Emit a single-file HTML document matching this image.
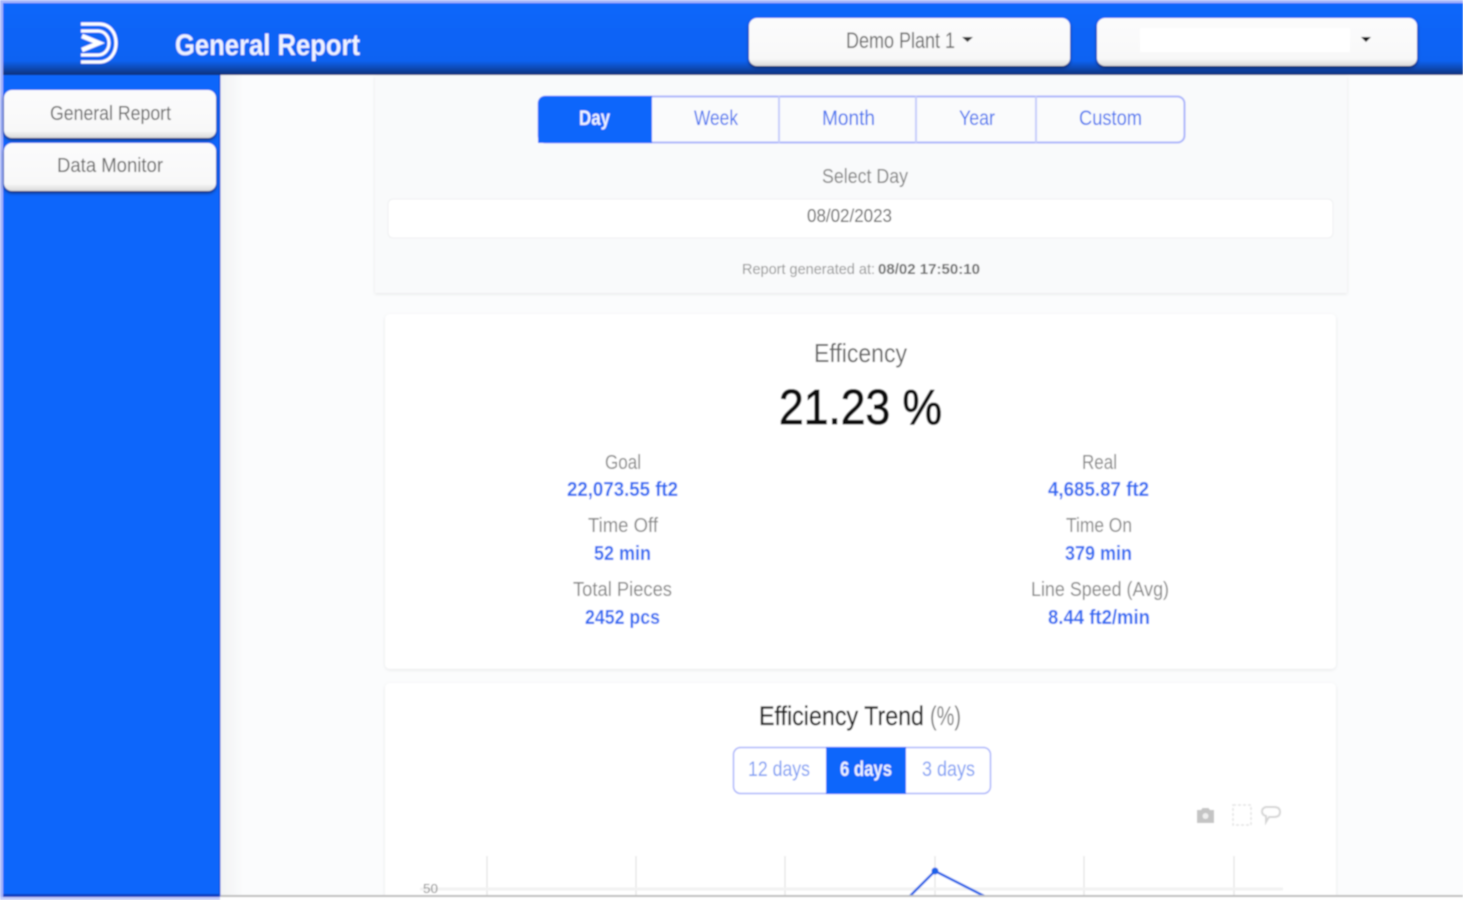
<!DOCTYPE html>
<html lang="en">
<head>
<meta charset="utf-8">
<title>General Report</title>
<style>
html,body{margin:0;padding:0;width:1463px;height:900px;overflow:hidden;background:#fff}
svg{display:block}
text{font-family:"Liberation Sans",sans-serif;text-anchor:start}
</style>
</head>
<body>
<svg width="1463" height="900" viewBox="0 0 1463 900" xmlns="http://www.w3.org/2000/svg">
<defs>
<filter id="b" x="-2%" y="-2%" width="104%" height="104%"><feGaussianBlur stdDeviation="0.75"/></filter>
<filter id="s" x="-10%" y="-30%" width="120%" height="160%"><feDropShadow dx="0" dy="2" stdDeviation="1.5" flood-color="#06205c" flood-opacity=".95"/></filter>
<filter id="c" x="-3%" y="-3%" width="106%" height="106%"><feDropShadow dx="0" dy="1" stdDeviation="1.5" flood-color="#000" flood-opacity=".09"/></filter>
<linearGradient id="hd" x1="0" y1="0" x2="0" y2="1">
<stop offset="0" stop-color="#0f66fb"/><stop offset=".8" stop-color="#0f62f2"/><stop offset=".9" stop-color="#0d4bb8"/><stop offset="1" stop-color="#0b2f78"/>
</linearGradient>
<linearGradient id="btn" x1="0" y1="0" x2="0" y2="1">
<stop offset="0" stop-color="#fbfbfc"/><stop offset=".85" stop-color="#f8f8f8"/><stop offset="1" stop-color="#d8d8d8"/>
</linearGradient>
<linearGradient id="sd" x1="0" y1="0" x2="1" y2="0">
<stop offset="0" stop-color="#f1f2f3"/><stop offset="1" stop-color="#fafbfc"/>
</linearGradient>
</defs>
<g filter="url(#b)">
<rect width="1463" height="900" fill="#fff"/>
<rect x="220" y="74" width="1243" height="822" fill="#fbfcfd"/>
<rect x="220" y="74" width="22" height="822" fill="url(#sd)"/>

<rect x="0" y="0" width="1463" height="3" fill="#a8b6fb"/>
<rect x="0" y="0" width="3" height="900" fill="#a8b6fb"/>
<rect x="3" y="3" width="217" height="893" fill="#0f66fb"/>
<rect x="3" y="3" width="1460" height="72" fill="url(#hd)"/>

<path d="M81 24H99C110 24 116 33 116 43C116 53 110 62 99 62H81" fill="none" stroke="#fff" stroke-width="3.200"/>
<path d="M81 31H98C105 31 109 37 109 43C109 49 105 55 98 55H81" fill="none" stroke="#fff" stroke-width="3"/>
<path d="M82 36L99 43L82 50" fill="none" stroke="#fff" stroke-width="4.500"/>
<text x="175" y="55" font-size="30" font-weight="700" fill="#eef2ff" textLength="185" lengthAdjust="spacingAndGlyphs">General Report</text>

<rect x="749" y="18" width="321" height="48" rx="8" fill="url(#btn)" filter="url(#s)"/>
<rect x="1097" y="18" width="320" height="48" rx="8" fill="url(#btn)" filter="url(#s)"/>
<rect x="1140" y="28" width="210" height="24" fill="#fff"/>
<text x="846" y="48" font-size="22" fill="#666" textLength="109" lengthAdjust="spacingAndGlyphs">Demo Plant 1</text>
<path d="M962 37h11l-5.500 5z" fill="#333"/>
<path d="M1361 37h10l-5 5z" fill="#111"/>

<rect x="4" y="90" width="212" height="48" rx="8" fill="url(#btn)" filter="url(#s)"/>
<rect x="4" y="143" width="212" height="48" rx="8" fill="url(#btn)" filter="url(#s)"/>
<text x="50" y="120" font-size="20" fill="#666" textLength="121" lengthAdjust="spacingAndGlyphs">General Report</text>
<text x="57" y="172" font-size="20" fill="#666" textLength="106" lengthAdjust="spacingAndGlyphs">Data Monitor</text>

<rect x="375" y="76" width="972" height="217" fill="#f9fafb" filter="url(#c)"/>
<rect x="538.500" y="96.500" width="646" height="46" rx="7" fill="#fafbfc" stroke="#aab4fb" stroke-width="2"/>
<path d="M546 96H652V143H538V104Q538 96 546 96Z" fill="#0f66fb"/>
<path d="M779 96V143M916 96V143M1036 96V143" stroke="#c6cdfb" stroke-width="2" fill="none"/>
<text x="579" y="125" font-size="21" font-weight="700" fill="#eef3ff" textLength="31" lengthAdjust="spacingAndGlyphs">Day</text>
<text x="694" y="125" font-size="21" fill="#3f70ef" textLength="44" lengthAdjust="spacingAndGlyphs">Week</text>
<text x="822" y="125" font-size="21" fill="#3f70ef" textLength="53" lengthAdjust="spacingAndGlyphs">Month</text>
<text x="959" y="125" font-size="21" fill="#3f70ef" textLength="36" lengthAdjust="spacingAndGlyphs">Year</text>
<text x="1079" y="125" font-size="21" fill="#3f70ef" textLength="63" lengthAdjust="spacingAndGlyphs">Custom</text>
<text x="822" y="183" font-size="20" fill="#808080" textLength="86" lengthAdjust="spacingAndGlyphs">Select Day</text>
<rect x="388" y="199" width="945" height="39" rx="5" fill="#fff" stroke="#eeeff1" stroke-width="1"/>
<text x="807" y="222" font-size="18" fill="#5e5e5e" textLength="85" lengthAdjust="spacingAndGlyphs">08/02/2023</text>
<text x="742" y="274" font-size="15" fill="#959595" textLength="133" lengthAdjust="spacingAndGlyphs">Report generated at:</text>
<text x="878" y="274" font-size="15" font-weight="700" fill="#6a6a6a" textLength="102" lengthAdjust="spacingAndGlyphs">08/02 17:50:10</text>

<rect x="385" y="314" width="951" height="355" rx="5" fill="#fff" filter="url(#c)"/>
<text x="814" y="362" font-size="26" fill="#636363" textLength="93" lengthAdjust="spacingAndGlyphs">Efficency</text>
<text x="779" y="424" font-size="49" fill="#111" stroke="#111" stroke-width="1" textLength="163" lengthAdjust="spacingAndGlyphs">21.23 %</text>

<text x="605" y="469" font-size="20" fill="#848484" textLength="36" lengthAdjust="spacingAndGlyphs">Goal</text>
<text x="567" y="496" font-size="20" font-weight="700" fill="#2f6cf2" textLength="111" lengthAdjust="spacingAndGlyphs">22,073.55 ft2</text>
<text x="588" y="532" font-size="20" fill="#848484" textLength="70" lengthAdjust="spacingAndGlyphs">Time Off</text>
<text x="594" y="560" font-size="20" font-weight="700" fill="#2f6cf2" textLength="57" lengthAdjust="spacingAndGlyphs">52 min</text>
<text x="573" y="596" font-size="20" fill="#848484" textLength="99" lengthAdjust="spacingAndGlyphs">Total Pieces</text>
<text x="585" y="624" font-size="20" font-weight="700" fill="#2f6cf2" textLength="75" lengthAdjust="spacingAndGlyphs">2452 pcs</text>

<text x="1082" y="469" font-size="20" fill="#848484" textLength="35" lengthAdjust="spacingAndGlyphs">Real</text>
<text x="1048" y="496" font-size="20" font-weight="700" fill="#2f6cf2" textLength="101" lengthAdjust="spacingAndGlyphs">4,685.87 ft2</text>
<text x="1066" y="532" font-size="20" fill="#848484" textLength="66" lengthAdjust="spacingAndGlyphs">Time On</text>
<text x="1065" y="560" font-size="20" font-weight="700" fill="#2f6cf2" textLength="67" lengthAdjust="spacingAndGlyphs">379 min</text>
<text x="1031" y="596" font-size="20" fill="#848484" textLength="138" lengthAdjust="spacingAndGlyphs">Line Speed (Avg)</text>
<text x="1048" y="624" font-size="20" font-weight="700" fill="#2f6cf2" textLength="102" lengthAdjust="spacingAndGlyphs">8.44 ft2/min</text>

<rect x="385" y="683" width="951" height="230" rx="5" fill="#fff" filter="url(#c)"/>
<text x="759" y="725" font-size="27" fill="#222" stroke="#222" stroke-width=".3" textLength="165" lengthAdjust="spacingAndGlyphs">Efficiency Trend</text>
<text x="930" y="725" font-size="27" fill="#777" textLength="31" lengthAdjust="spacingAndGlyphs">(%)</text>
<rect x="733.500" y="747.500" width="257" height="46" rx="7" fill="#fff" stroke="#aab4fb" stroke-width="1.500"/>
<rect x="826" y="747" width="80" height="47" fill="#0f66fb"/>
<text x="748" y="776" font-size="21" fill="#7c9cf3" textLength="62" lengthAdjust="spacingAndGlyphs">12 days</text>
<text x="840" y="776" font-size="21" font-weight="700" fill="#eef3ff" textLength="52" lengthAdjust="spacingAndGlyphs">6 days</text>
<text x="922" y="776" font-size="21" fill="#7c9cf3" textLength="53" lengthAdjust="spacingAndGlyphs">3 days</text>

<path d="M1197 810h4l1.500-2h6l1.500 2h4v13h-17z" fill="#c4c4c4"/>
<circle cx="1205.500" cy="816" r="3" fill="#eee"/>
<rect x="1233" y="805" width="18" height="20" fill="none" stroke="#e4e4e4" stroke-width="1.500" stroke-dasharray="3 2"/>
<path d="M1266 807h8q6 0 6 5t-6 5h-5l-3 5v-6q-4-1-4-4.500t4-4.500z" fill="none" stroke="#d6d6d6" stroke-width="2"/>

<path d="M487 856V896M636 856V896M785 856V896M935 856V896M1084 856V896M1234 856V896" stroke="#e2e2e2" stroke-width="1.200" fill="none"/>
<path d="M420 889H1283" stroke="#f2f2f2" stroke-width="3" fill="none"/>
<text x="423" y="893" font-size="13" fill="#8a8a8a" textLength="15" lengthAdjust="spacingAndGlyphs">50</text>
<path d="M908 898L935 871L988 898" fill="none" stroke="#1a62e8" stroke-width="2.500"/>
<circle cx="935" cy="871" r="3.500" fill="#1a62e8"/>

<rect x="220" y="895" width="1243" height="2" fill="#bdbdbd"/>
<rect x="3" y="894" width="217" height="3" fill="#0a3fc0"/>
<rect x="219" y="75" width="1.500" height="821" fill="#0a4fd8"/>
<rect x="220" y="897" width="1243" height="3" fill="#fff"/>
<rect x="0" y="897" width="220" height="3" fill="#c5cdfb"/>
</g>
</svg>
</body>
</html>
